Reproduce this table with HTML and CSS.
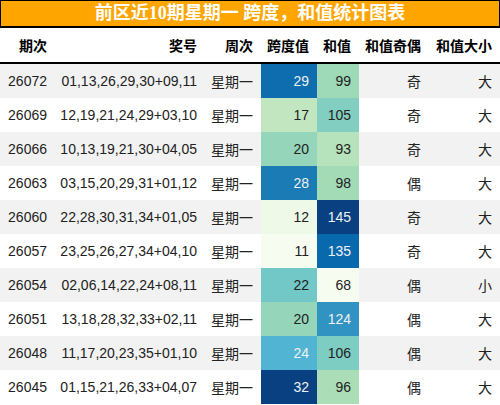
FILE: index.html
```html
<!DOCTYPE html>
<html lang="zh-CN">
<head>
  <meta charset="UTF-8" />
  <title>前区近10期星期一 跨度，和值统计图表</title>
  <link rel="stylesheet" href="styles.css">
</head>
<body>
  <div class="title">前区近10期星期一 跨度，和值统计图表</div>
  <table class="stats">
    <colgroup>
      <col class="c-issue"><col class="c-nums"><col class="c-week">
      <col class="c-span"><col class="c-sum"><col class="c-odd"><col class="c-size">
    </colgroup>
    <thead>
      <tr>
        <th>期次</th><th>奖号</th><th>周次</th><th>跨度值</th><th>和值</th><th>和值奇偶</th><th>和值大小</th>
      </tr>
    </thead>
    <tbody id="rows"></tbody>
  </table>

  <script>
    const rows = [
      ["26072", "01,13,26,29,30+09,11", 29, 99, "奇", "大"],
      ["26069", "12,19,21,24,29+03,10", 17, 105, "奇", "大"],
      ["26066", "10,13,19,21,30+04,05", 20, 93, "奇", "大"],
      ["26063", "03,15,20,29,31+01,12", 28, 98, "偶", "大"],
      ["26060", "22,28,30,31,34+01,05", 12, 145, "奇", "大"],
      ["26057", "23,25,26,27,34+04,10", 11, 135, "奇", "大"],
      ["26054", "02,06,14,22,24+08,11", 22, 68, "偶", "小"],
      ["26051", "13,18,28,32,33+02,11", 20, 124, "偶", "大"],
      ["26048", "11,17,20,23,35+01,10", 24, 106, "偶", "大"],
      ["26045", "01,15,21,26,33+04,07", 32, 96, "偶", "大"]
    ];

    // GnBu 色阶
    const gnbu = ["#f7fcf0", "#e0f3db", "#ccebc5", "#a8ddb5", "#7bccc4", "#4eb3d3", "#2b8cbe", "#0868ac", "#084081"];
    const hex = h => [1, 3, 5].map(i => parseInt(h.substr(i, 2), 16));

    function colorAt(t) {
      const pos = t * (gnbu.length - 1);
      const i = Math.min(Math.floor(pos), gnbu.length - 2);
      const f = pos - i;
      const a = hex(gnbu[i]), b = hex(gnbu[i + 1]);
      return a.map((v, k) => Math.round(v + (b[k] - v) * f));
    }

    function lum(rgb) {
      const c = rgb.map(v => {
        v = v / 255;
        return v <= 0.03928 ? v / 12.92 : Math.pow((v + 0.055) / 1.055, 2.4);
      });
      return 0.2126 * c[0] + 0.7152 * c[1] + 0.0722 * c[2];
    }

    function heatCell(v, min, max) {
      const td = document.createElement("td");
      const rgb = colorAt((v - min) / (max - min));
      td.textContent = v;
      td.style.background = `rgb(${rgb.join(",")})`;
      if (lum(rgb) < 0.408) td.classList.add("light");
      return td;
    }

    const spans = rows.map(r => r[2]);
    const sums = rows.map(r => r[3]);
    const body = document.getElementById("rows");

    rows.forEach(r => {
      const tr = document.createElement("tr");
      [r[0], r[1], "星期一"].forEach(t => {
        const td = document.createElement("td");
        td.textContent = t;
        tr.appendChild(td);
      });
      tr.appendChild(heatCell(r[2], Math.min(...spans), Math.max(...spans)));
      tr.appendChild(heatCell(r[3], Math.min(...sums), Math.max(...sums)));
      [r[4], r[5]].forEach(t => {
        const td = document.createElement("td");
        td.textContent = t;
        tr.appendChild(td);
      });
      body.appendChild(tr);
    });
  </script>
</body>
</html>
```

FILE: styles.css
```css
body {
  margin: 0;
  width: 500px;
  font-family: 'Liberation Sans', 'Noto Sans CJK SC', sans-serif;
  color: #222;
  background: #fff;
}
.title {
  height: 25px;
  line-height: 25px;
  background-color: #ffa500;
  border: 1px solid #000;
  border-bottom-width: 2px;
  color: #fff;
  font-family: 'Liberation Serif', 'Noto Sans CJK SC', serif;
  font-size: 18px;
  font-weight: bold;
  text-align: center;
}
.stats {
  width: 500px;
  border-collapse: collapse;
  table-layout: fixed;
  font-size: 14px;
}
.c-issue { width: 55px; }
.c-nums { width: 150px; }
.c-week { width: 56px; }
.c-span { width: 56px; }
.c-sum { width: 42px; }
.c-odd { width: 70px; }
.c-size { width: 71px; }
.stats th,
.stats td {
  padding: 0 8px 0 0;
  text-align: right;
  white-space: nowrap;
}
.stats th {
  height: 34px;
  color: #000;
  font-weight: bold;
  border-bottom: 2px solid #000;
}
.stats td {
  height: 34px;
}
.stats tbody tr:nth-child(odd) {
  background-color: #f2f2f2;
}
.stats td.light {
  color: #f1f1f1;
}
```
